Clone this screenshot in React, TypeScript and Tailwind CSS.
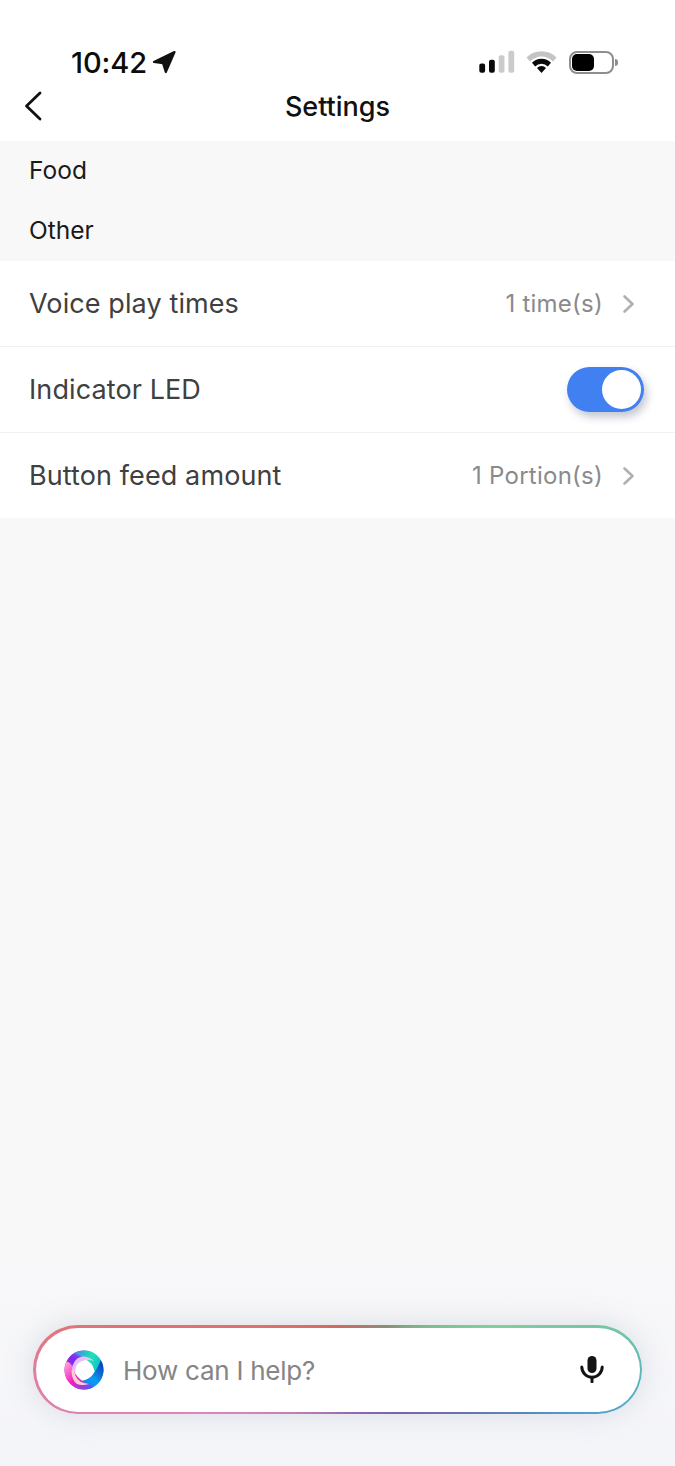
import React from 'react';

const font = "font-['Inter','Liberation_Sans',sans-serif]";

const Chevron = () => (
  <svg width="14" height="20" viewBox="0 0 14 20" fill="none" className="ml-[19px]">
    <path d="M2.5 2.5 L10.5 10 L2.5 17.5" stroke="#b0b0b0" strokeWidth="2.6" strokeLinecap="round" strokeLinejoin="round" />
  </svg>
);

const StatusBar = () => (
  <div className="flex items-center justify-between h-[46px] pl-[71px] pr-[57px]">
    <div className="flex items-center gap-[5px]">
      <span className="text-[29px] leading-none font-medium tracking-[-0.1px] text-[#0c0c0c]">10:42</span>
      <svg width="24" height="24" viewBox="0 0 24 24">
        <path d="M22.5 2 L2 12 L11 13.2 L13.8 22 Z" fill="#111" stroke="#111" strokeWidth="2.2" strokeLinejoin="round" />
      </svg>
    </div>
    <div className="flex items-center">
      <svg width="36" height="24" viewBox="0 0 36 24">
        <rect x="0.3" y="13.5" width="5.8" height="9.3" rx="2" fill="#0a0a0a" />
        <rect x="10" y="9.8" width="5.8" height="13" rx="2" fill="#0a0a0a" />
        <rect x="19.7" y="5.2" width="5.8" height="17.6" rx="2" fill="#cbcbcb" />
        <rect x="29.4" y="0.8" width="5.8" height="22" rx="2" fill="#cbcbcb" />
      </svg>
      <svg width="31" height="24" viewBox="0 0 31 24" className="ml-[11px]">
        <path d="M0.5 7.5 A21 21 0 0 1 30.5 7.5 L27 11.5 A16 16 0 0 0 4 11.5 Z" fill="#c4c4c4" />
        <path d="M6 12.8 A13 13 0 0 1 25 12.8 L21.8 16.4 A8.6 8.6 0 0 0 9.2 16.4 Z" fill="#0a0a0a" />
        <path d="M11 18 A6 6 0 0 1 20 18 L15.5 23 Z" fill="#0a0a0a" />
      </svg>
      <div className="flex items-center ml-[12px]">
        <div className="w-[45px] h-[23px] rounded-[8px] border-2 border-[#8e8e8e] p-[1px]">
          <div className="w-[22px] h-full rounded-[5px] bg-black" />
        </div>
        <div className="w-[3px] h-[7px] ml-[1px] rounded-r-full bg-[#8e8e8e]" />
      </div>
    </div>
  </div>
);

const blade = 'M10 3.2 A19.5 19.5 0 0 1 37.5 28.5 Q33 28 30.5 21 Q28 10 10 3.2 Z';

const Swirl = () => (
  <svg width="40" height="40" viewBox="0 0 40 40">
    <defs>
      <linearGradient id="mint" x1="0" y1="0.2" x2="1" y2="0.5">
        <stop offset="0" stopColor="#3f8fe8" />
        <stop offset="0.55" stopColor="#18e4b4" />
        <stop offset="1" stopColor="#10b8d8" />
      </linearGradient>
      <linearGradient id="blue" x1="0" y1="0" x2="1" y2="1">
        <stop offset="0" stopColor="#0a2cb0" />
        <stop offset="0.5" stopColor="#0a9cf2" />
        <stop offset="1" stopColor="#1870f0" />
      </linearGradient>
      <linearGradient id="pink" x1="0" y1="0" x2="1" y2="1">
        <stop offset="0" stopColor="#4060f0" />
        <stop offset="0.5" stopColor="#f21cc4" />
        <stop offset="1" stopColor="#ffb0d8" />
      </linearGradient>
      <linearGradient id="violet" x1="0" y1="0" x2="1" y2="1">
        <stop offset="0" stopColor="#f030d0" />
        <stop offset="0.5" stopColor="#7a28f0" />
        <stop offset="1" stopColor="#b070f5" />
      </linearGradient>
    </defs>
    <path d={blade} fill="url(#violet)" transform="rotate(-90 20 20)" />
    <path d={blade} fill="url(#mint)" />
    <path d={blade} fill="url(#blue)" transform="rotate(90 20 20)" />
    <path d={blade} fill="url(#pink)" transform="rotate(180 20 20)" />
    <path d="M8 21 Q8 9 18 6.5 Q25 6 30 11 Q22 8.5 16 12 Q12 15 11.5 22 Z" fill="#e4c0f4" />
    <path d="M20 33 Q12 31 10 21 L7.5 20 Q7.5 30 13 34 Q18 36 25 34 Z" fill="#ffd0cc" />
    <circle cx="20.5" cy="20" r="9.2" fill="#fff" />
  </svg>
);

const Row = ({ label, children, last }: { label: string; children: React.ReactNode; last?: boolean }) => (
  <div className={`flex items-center justify-between pl-[29px] bg-white ${last ? 'h-[85px]' : 'h-[86px] border-b border-[#f0f0f0]'}`}>
    <span className="pt-[2px] text-[27px] tracking-[0.1px] text-[#404040]">{label}</span>
    {children}
  </div>
);

const Value = ({ text }: { text: string }) => (
  <div className="flex items-center pr-[39px]">
    <span className="text-[24px] tracking-[0.25px] text-[#8a8a8a]">{text}</span>
    <Chevron />
  </div>
);

export default function App() {
  return (
    <div className={`relative flex flex-col h-[1466px] w-[675px] overflow-hidden bg-[#f8f8f9] ${font}`}>
      {/* Header */}
      <header className="bg-white h-[141px] pt-[39px]">
        <StatusBar />
        <div className="relative flex items-center justify-center h-[42px]">
          <svg width="20" height="30" viewBox="0 0 20 30" fill="none" className="absolute left-[23px] top-[6px]">
            <path d="M17 2 L3.5 15 L17 28" stroke="#111" strokeWidth="2.8" strokeLinecap="round" strokeLinejoin="round" />
          </svg>
          <h1 className="pt-[2px] text-[27px] font-medium text-[#111]">Settings</h1>
        </div>
      </header>

      {/* Section labels */}
      <div className="flex flex-col">
        <div className="h-[60px] flex items-center pl-[29px] pb-[2px] text-[24.5px] text-[#1a1a1a]">Food</div>
        <div className="h-[60px] flex items-center pl-[29px] pb-[2px] text-[24.5px] text-[#1a1a1a]">Other</div>
      </div>

      {/* Rows */}
      <Row label="Voice play times">
        <Value text="1 time(s)" />
      </Row>
      <Row label="Indicator LED">
        <div className="mr-[31px] flex justify-end items-center w-[77px] h-[45px] rounded-full bg-[#4080f0] pr-[3px] shadow-[3px_5px_8px_rgba(40,50,90,0.28)]">
          <div className="w-[39px] h-[39px] rounded-full bg-white" />
        </div>
      </Row>
      <Row label="Button feed amount" last>
        <Value text="1 Portion(s)" />
      </Row>

      {/* Assistant bar */}
      <div className="mt-auto pb-[52px] pt-[60px] px-[33px] bg-gradient-to-b from-[#f8f8f9] to-[#f4f5f9]">
        <div className="h-[89px] rounded-full p-[2.5px] bg-[conic-gradient(from_0deg_at_50%_50%,#d06a5c_0deg,#b0786c_30deg,#8a9078_50deg,#7cbd8e_65deg,#82cf9c_75deg,#5fb9b6_90deg,#4f9fd2_100deg,#5a85c0_103deg,#6a70b8_109deg,#7a62b0_125deg,#9a70b0_180deg,#c07fb8_227deg,#de84c0_252deg,#df7f9b_270deg,#e07272_281deg,#d86c60_340deg,#d06a5c_360deg)] shadow-[0_0_30px_rgba(120,130,150,0.22)]">
          <div className="flex items-center h-full rounded-full bg-white pl-[28.5px] pr-[36px]">
            <Swirl />
            <span className="ml-[19px] pt-[1px] text-[26px] tracking-[-0.25px] text-[#858585]">How can I help?</span>
            <svg width="24" height="27" viewBox="0 0 24 27" className="ml-auto">
              <rect x="7.5" y="0" width="9" height="17" rx="4.5" fill="#141414" />
              <path d="M1.8 11 A10.2 10.2 0 0 0 22.2 11" fill="none" stroke="#141414" strokeWidth="3" strokeLinecap="round" />
              <rect x="10.5" y="20" width="3" height="7" rx="1" fill="#141414" />
            </svg>
          </div>
        </div>
      </div>
    </div>
  );
}
